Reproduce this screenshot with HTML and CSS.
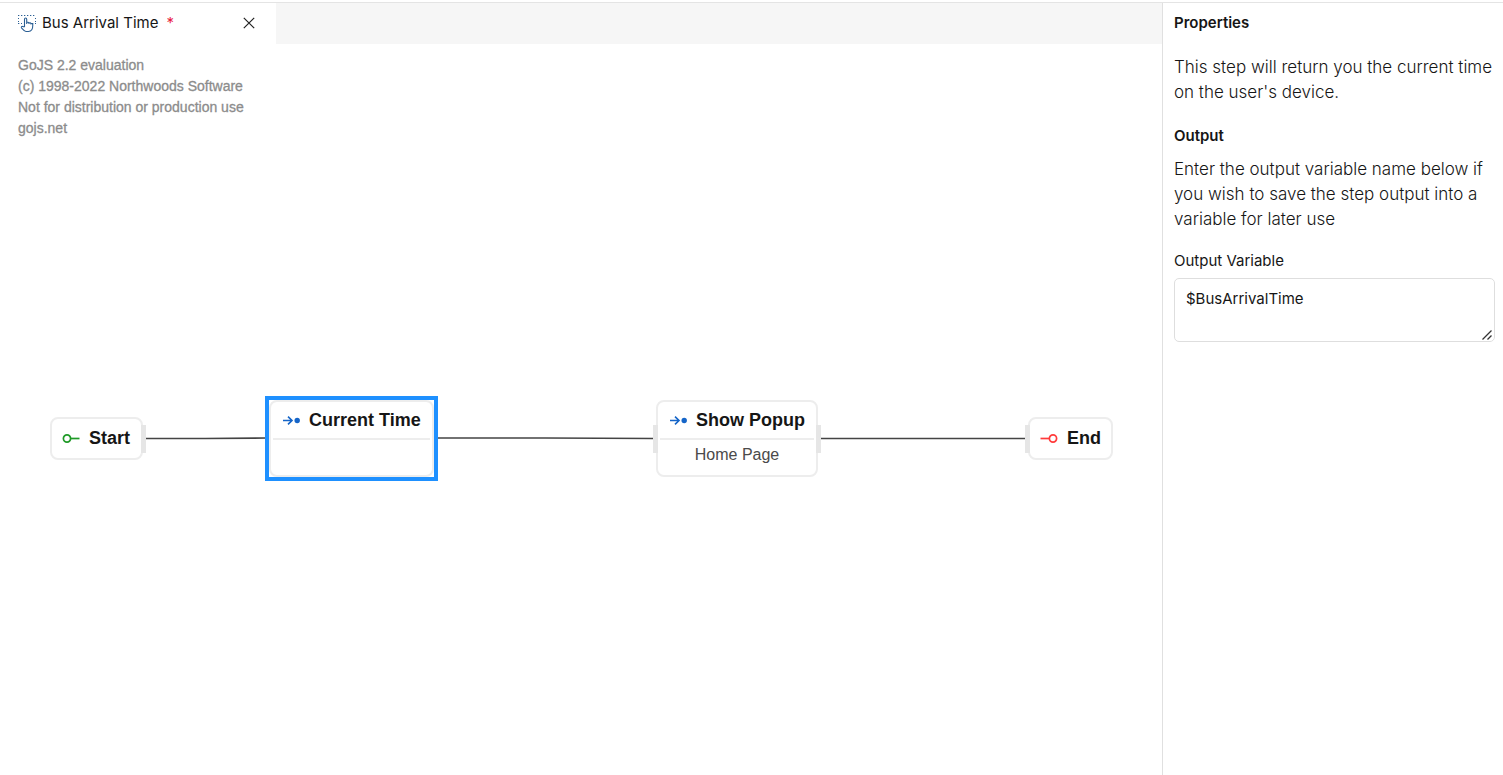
FILE: index.html
```html
<!DOCTYPE html>
<html lang="en">
<head>
<meta charset="utf-8">
<title>Bus Arrival Time</title>
<link rel="stylesheet" href="styles.css">
</head>
<body>
<div class="app">
  <main class="editor">
    <div class="tabs">
      <div class="tab">
        <svg class="tab-icon" width="20" height="20" viewBox="0 0 20 20" fill="none" stroke="#2b5f94">
          <path d="M1 2.500h18M1 10.500h4M15 10.500h4" stroke-dasharray="1.300 1.700"/>
          <path d="M1.500 5v4M18.500 5v4" stroke-dasharray="1 2"/>
          <path d="M7.500 14V6.200c0-1.600 2.200-1.600 2.200 0V11M9.700 9.500c2-.6 2.300 0 2.300 1.500M12 10c1.600-.6 2 .1 2 1.500M14 10.600c1.500-.4 1.800.3 1.800 1.400 0 3.500-.8 6.500-4.300 6.500H9c-2 0-3-2-4.500-3.700-.6-1 .4-1.900 1.300-1.200L7.500 14" stroke-width="1.100"/>
        </svg>
        <span class="tab-title">Bus Arrival Time</span>
        <span class="tab-dirty">*</span>
        <button class="tab-close" type="button" aria-label="Close">
          <svg width="12" height="12" viewBox="0 0 12 12" fill="none" stroke="#222" stroke-width="1.200"><path d="M.8.8l10.400 10.400M11.200.8L.8 11.200"/></svg>
        </button>
      </div>
    </div>
    <div class="canvas">
      <p class="watermark">GoJS 2.2 evaluation<br>(c) 1998-2022 Northwoods Software<br>Not for distribution or production use<br>gojs.net</p>
      <svg class="links" width="1162" height="731" viewBox="0 0 1162 731" fill="none" stroke="#444" stroke-width="1.700">
        <path d="M146 394.500H205L266 394M437 394H545L654 394.500M821 394.500H924L1026 394.500"/>
      </svg>
      <div class="node terminal start">
        <svg width="18" height="10" viewBox="0 0 18 10" fill="none" stroke="#1f9a27" stroke-width="1.700"><circle cx="5" cy="4.500" r="3.600"/><path d="M8.600 4.500H17.500"/></svg>
        <span>Start</span>
        <i class="port right"></i>
      </div>
      <div class="node step current selected">
        <div class="node-head">
          <svg width="18" height="10" viewBox="0 0 18 10" fill="none" stroke="#1565c8" stroke-width="1.600"><path d="M1 5.500H9.500M6 1.700L10 5.500L6 9.300"/><circle cx="15.200" cy="5.500" r="2.700" fill="#1565c8" stroke="none"/></svg>
          <span>Current Time</span>
        </div>
        <div class="node-body"></div>
      </div>
      <div class="node step popup">
        <i class="port left"></i>
        <div class="node-head">
          <svg width="18" height="10" viewBox="0 0 18 10" fill="none" stroke="#1565c8" stroke-width="1.600"><path d="M1 5.500H9.500M6 1.700L10 5.500L6 9.300"/><circle cx="15.200" cy="5.500" r="2.700" fill="#1565c8" stroke="none"/></svg>
          <span>Show Popup</span>
        </div>
        <div class="node-body">Home Page</div>
        <i class="port right"></i>
      </div>
      <div class="node terminal end">
        <i class="port left"></i>
        <svg width="18" height="10" viewBox="0 0 18 10" fill="none" stroke="#ff3b3b" stroke-width="1.700"><circle cx="13" cy="4.500" r="3.600"/><path d="M.5 4.500H9.400"/></svg>
        <span>End</span>
      </div>
    </div>
  </main>
  <aside class="panel">
    <h2 class="heading">Properties</h2>
    <p class="text intro">This step will return you the current time on the user's device.</p>
    <h2 class="heading">Output</h2>
    <p class="text hint">Enter the output variable name below if you wish to save the step output into a variable for later use</p>
    <label class="label" for="output-variable">Output Variable</label>
    <div class="field-wrap">
      <textarea class="field" id="output-variable" spellcheck="false">$BusArrivalTime</textarea>
      <svg class="grip" width="12" height="12" viewBox="0 0 12 12" stroke="#333" stroke-width="1.300"><path d="M1.500 10.500L10.500 1.500M6.500 10.500L10.500 6.500"/></svg>
    </div>
  </aside>
</div>
</body>
</html>
```
FILE: styles.css
```css
* { box-sizing: border-box; }
body {
  margin: 0;
  padding-top: 2px;
  background: #fff;
  color: #161616;
  font-family: Inter, sans-serif;
  font-size: 15px;
}
.app {
  display: flex;
  min-height: calc(100vh - 2px);
  border-top: 1px solid #e4e4e4;
}
.editor {
  flex: 1;
  min-width: 0;
  display: flex;
  flex-direction: column;
}
.tabs {
  display: flex;
  height: 41px;
  background: #f6f6f6;
}
.tab {
  display: flex;
  align-items: center;
  width: 276px;
  padding: 0 19px 2px 17px;
  background: #fff;
}
.tab-icon { margin-right: 5px; }
.tab-dirty { margin-left: 8px; color: #e8213f; }
.tab-close {
  display: flex;
  margin-left: auto;
  padding: 2px;
  border: 0;
  background: none;
}
.canvas {
  position: relative;
  flex: 1;
  overflow: hidden;
  font-family: "Liberation Sans", Arial, sans-serif;
}
.watermark {
  margin: 0;
  padding: 11px 18px;
  color: #8c8c8c;
  font-size: 14px;
  line-height: 21px;
  -webkit-text-stroke: 0.3px #8c8c8c;
}
.links { position: absolute; top: 0; left: 0; }
.node {
  position: absolute;
  border: 2px solid #ededed;
  border-radius: 8px;
  background: #fff;
  font-size: 18px;
  font-weight: bold;
  white-space: nowrap;
}
.node svg { flex: none; }
.terminal {
  display: flex;
  align-items: center;
  gap: 9px;
  height: 43px;
  padding: 0 10px;
}
.start { top: 373px; left: 50px; width: 93px; }
.end { top: 373px; left: 1028px; width: 85px; }
.step { height: 77px; padding: 0 2px; }
.current { top: 356px; left: 269px; width: 165px; }
.popup { top: 356px; left: 656px; width: 162px; }
.selected::before {
  content: "";
  position: absolute;
  inset: -6px;
  border: 4px solid #1e90ff;
}
.node-head {
  display: flex;
  align-items: center;
  gap: 9px;
  height: 38px;
  padding: 0 9px;
  border-bottom: 2px solid #ededed;
}
.node-body {
  color: #4a4a4a;
  font-size: 16px;
  font-weight: normal;
  line-height: 30px;
  text-align: center;
}
.port {
  position: absolute;
  top: 50%;
  width: 5px;
  height: 28px;
  margin-top: -14px;
  background: #e6e6e6;
}
.port.left { right: 100%; }
.port.right { left: 100%; }
.panel {
  width: 341px;
  padding: 10px 8px 0 11px;
  border-left: 1px solid #e0e0e0;
}
.heading {
  margin: 0;
  font-size: 15px;
  font-weight: 600;
  line-height: 20px;
}
.text {
  margin: 0;
  font-size: 17px;
  font-weight: 300;
  line-height: 25px;
}
.intro { padding: 22px 0 21px; }
.hint { padding: 11px 0 19px; }
.label { display: block; line-height: 20px; }
.field-wrap { position: relative; margin-top: 7px; }
.field {
  display: block;
  width: 100%;
  height: 64px;
  padding: 10px 11px;
  border: 1px solid #dedede;
  border-radius: 5px;
  background: #fff;
  color: inherit;
  font: inherit;
  line-height: 20px;
  resize: vertical;
}
.field::-webkit-resizer { background: transparent; }
.grip {
  position: absolute;
  right: 2px;
  bottom: 1px;
  pointer-events: none;
}
```
